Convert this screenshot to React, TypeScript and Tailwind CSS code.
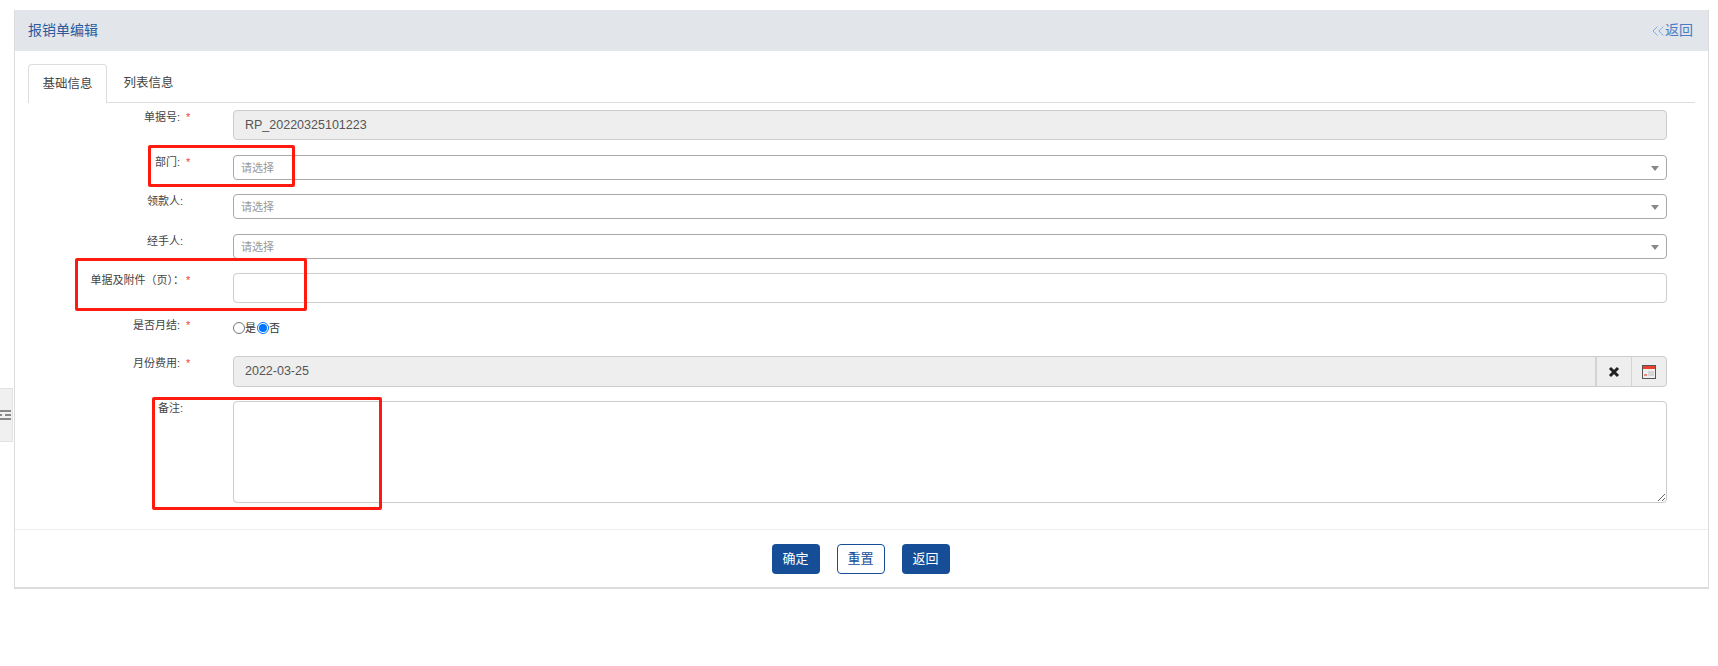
import React from 'react'
import { ChevronsLeft } from 'lucide-react'

const FONT = "font-['Liberation_Sans','Noto_Sans_CJK_SC',sans-serif]"

const Label = ({ text, required, wide }: { text: string; required?: boolean; wide?: boolean }) => (
    <div className={`flex justify-end w-[218px] text-[11px] leading-[14px] text-[#444] ${required ? 'pr-[44px]' : 'pr-[50px]'}`}>
        <span className={wide ? '-mr-[4px]' : ''}>{text}</span>
        {required && <span className="ml-[6px] w-[3px] text-[#f0413c]">*</span>}
    </div>
)

const Select = () => (
    <div className="flex items-center justify-between w-[1434px] h-[25px] border border-[#a9a9a9] rounded-[4px] pl-[7px] pr-[7px] pt-[1px] text-[11px] text-[#999] bg-white">
        <span>请选择</span>
        <span className="w-0 h-0 border-x-[4px] border-x-transparent border-t-[5px] border-t-[#888]" />
    </div>
)

const CloseIcon = () => (
    <svg width="12" height="12" viewBox="0 0 12 12">
        <path d="M2 2l8 8M10 2l-8 8" stroke="#222" strokeWidth="3" />
    </svg>
)

const CalendarIcon = () => (
    <svg width="14" height="14" viewBox="0 0 14 14">
        <rect x="0.5" y="0.5" width="13" height="13" fill="#eee" stroke="#555" />
        <rect x="1" y="1" width="12" height="3" fill="#e8432e" />
        <rect x="6" y="6" width="6" height="5" fill="#d5d5d5" />
        <rect x="2" y="9" width="3" height="2" fill="#e58d80" />
    </svg>
)

const App = () => {
    return (
        <div className={`relative h-[666px] bg-white pt-[10px] pl-[14px] ${FONT}`}>
            <div className="absolute left-0 top-[388px] w-[13px] h-[54px] bg-[#f0f0f0] border border-l-0 border-[#e2e2e2] flex flex-col justify-center gap-[2px] pr-[1px]">
                <div className="h-[2px] bg-[#888]" />
                <div className="flex gap-[1px]">
                    <div className="w-[2px] h-[2px] bg-[#888]" />
                    <div className="flex-1 h-[2px] ml-[2px] bg-[#888]" />
                </div>
                <div className="h-[2px] bg-[#888]" />
            </div>

            <div className="w-[1695px] h-[579px] border border-t-0 border-[#dcdcdc] border-b-2">
                <div className="flex items-center justify-between h-[41px] bg-[#e2e5ea] pl-[13px] pr-[15px] text-[14px]">
                    <span className="text-[#2a5a9c]">报销单编辑</span>
                    <span className="flex items-center text-[#4a7cc4]">
                        <ChevronsLeft size={20} strokeWidth={1} className="text-[#6a9de6] -mr-[3px]" />
                        返回
                    </span>
                </div>

                <div className="mx-[13px] mt-[13px] h-[39px] flex border-b border-[#dddddd] text-[12.5px] text-[#444]">
                    <div className="w-[79px] h-[39px] flex items-center justify-center bg-white border border-b-0 border-[#dddddd] rounded-t-[4px]">基础信息</div>
                    <div className="w-[83px] h-[38px] flex items-center justify-center">列表信息</div>
                </div>

                <div className="mt-[7px] flex">
                    <Label text="单据号:" required />
                    <div className="w-[1434px] h-[30px] flex items-center border border-[#cccccc] rounded-[4px] bg-[#eeeeee] pl-[11px] text-[12.5px] text-[#555]">RP_20220325101223</div>
                </div>
                <div className="mt-[15px] flex">
                    <Label text="部门:" required />
                    <Select />
                </div>
                <div className="mt-[14px] flex">
                    <Label text="领款人:" />
                    <Select />
                </div>
                <div className="mt-[15px] flex">
                    <Label text="经手人:" />
                    <Select />
                </div>
                <div className="mt-[14px] flex">
                    <Label text="单据及附件（页）：" required wide />
                    <div className="w-[1434px] h-[30px] border border-[#cccccc] rounded-[4px] bg-white" />
                </div>
                <div className="mt-[15px] h-[38px] flex">
                    <Label text="是否月结:" required />
                    <div className="flex items-center h-[20px] text-[11px] text-[#333]">
                        <span className="w-[12px] h-[12px] rounded-full border border-[#767676] bg-white" />
                        <span className="mr-[1px]">是</span>
                        <span className="w-[12px] h-[12px] rounded-full border border-[#0075ff] flex items-center justify-center bg-white">
                            <span className="w-[8px] h-[8px] rounded-full bg-[#0075ff]" />
                        </span>
                        <span>否</span>
                    </div>
                </div>
                <div className="flex">
                    <Label text="月份费用:" required />
                    <div className="w-[1434px] h-[31px] flex border border-[#cccccc] rounded-[4px] bg-[#eeeeee] text-[12.5px] text-[#555]">
                        <div className="flex-1 flex items-center pl-[11px]">2022-03-25</div>
                        <div className="w-[36px] flex items-center justify-center border-l-2 border-[#d4d4d4]">
                            <CloseIcon />
                        </div>
                        <div className="w-[35px] flex items-center justify-center border-l border-[#d4d4d4]">
                            <CalendarIcon />
                        </div>
                    </div>
                </div>
                <div className="mt-[14px] flex">
                    <Label text="备注:" />
                    <textarea className="block w-[1434px] h-[102px] border border-[#cccccc] rounded-[4px] bg-white outline-none" />
                </div>

                <div className="mt-[26px] border-t border-[#eeeeee] pt-[14px] pr-[2px] flex justify-center gap-[17px] text-[13px]">
                    <button className="w-[48px] h-[30px] bg-[#154e97] text-white rounded-[4px]">确定</button>
                    <button className="w-[48px] h-[30px] bg-white text-[#154e97] border border-[#154e97] rounded-[4px]">重置</button>
                    <button className="w-[48px] h-[30px] bg-[#154e97] text-white rounded-[4px]">返回</button>
                </div>
            </div>

            <div className="absolute left-[148px] top-[145px] w-[147px] h-[42px] border-[3px] border-[#ff1a10] rounded-[2px]" />
            <div className="absolute left-[75px] top-[258px] w-[232px] h-[53px] border-[3px] border-[#ff1a10] rounded-[2px]" />
            <div className="absolute left-[152px] top-[397px] w-[230px] h-[113px] border-[3px] border-[#ff1a10] rounded-[2px]" />
        </div>
    )
}

export default App
